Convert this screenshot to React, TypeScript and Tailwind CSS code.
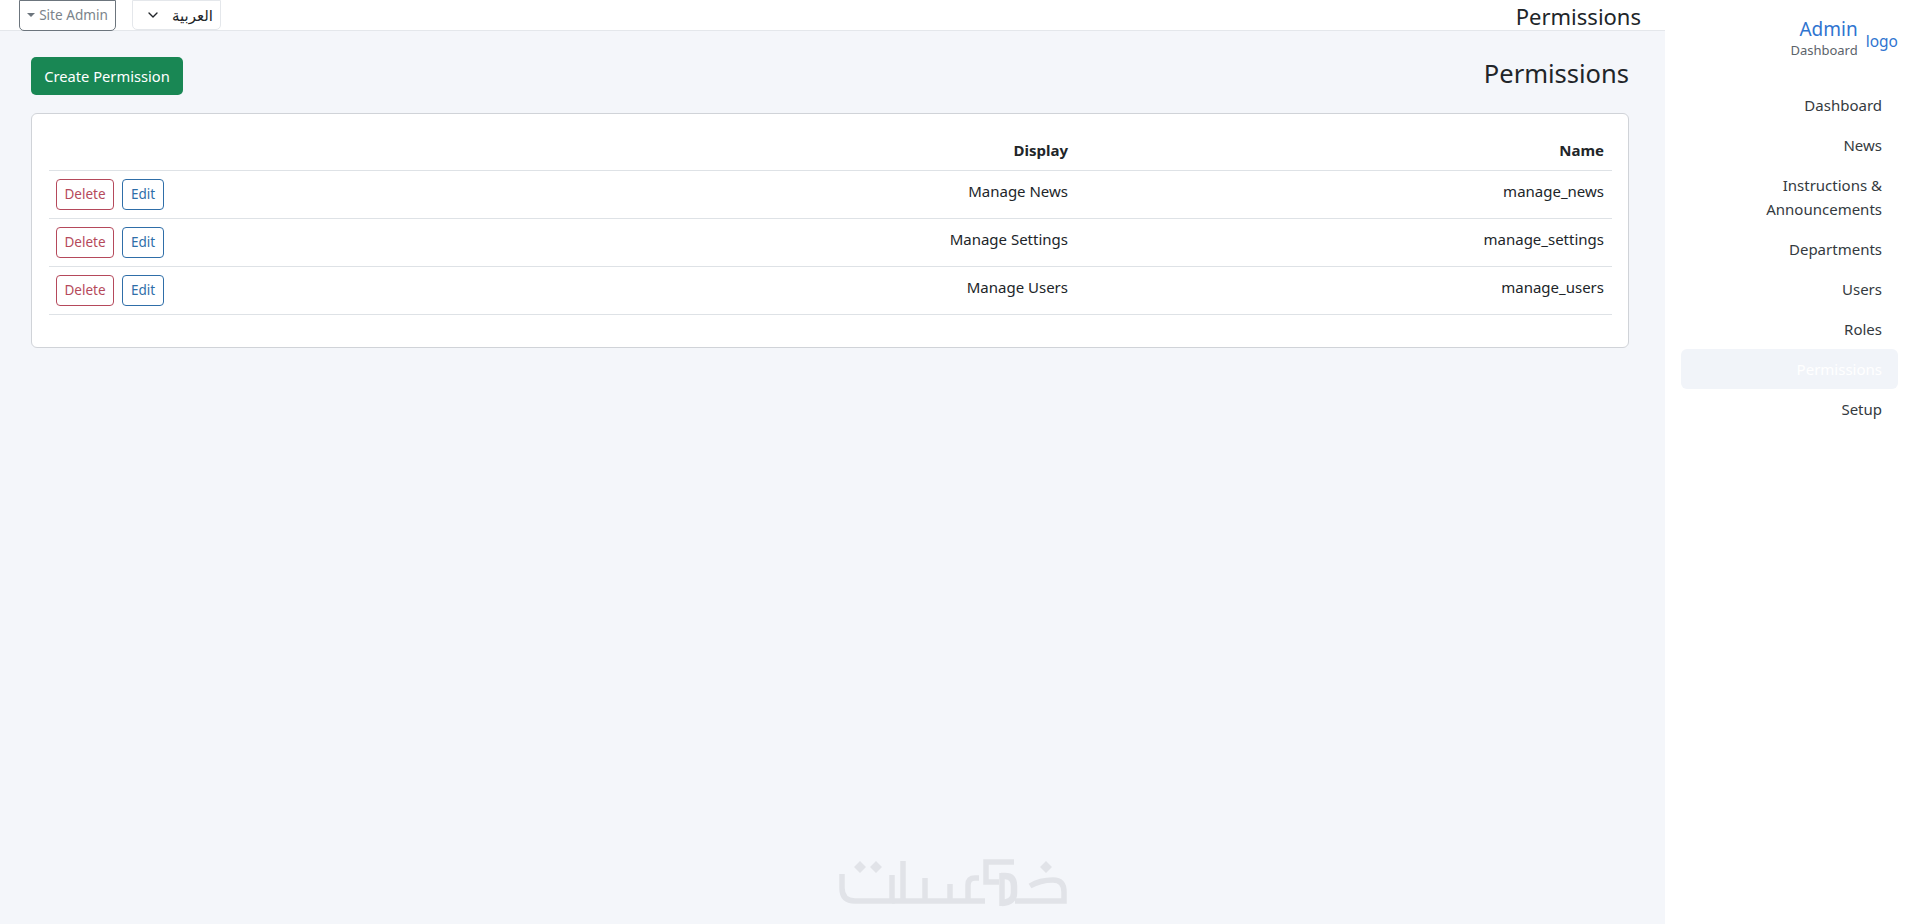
import { ChevronDown } from "lucide-react";

const navItems = [
  { label: "Dashboard", y: "h-10" },
  { label: "News", y: "h-10" },
  { label: "Instructions & Announcements", y: "py-2" },
  { label: "Departments", y: "h-10" },
  { label: "Users", y: "h-10" },
  { label: "Roles", y: "h-10" },
  { label: "Permissions", y: "h-10", active: true },
  { label: "Setup", y: "h-10" },
];

const rows = [
  { display: "Manage News", name: "manage_news" },
  { display: "Manage Settings", name: "manage_settings" },
  { display: "Manage Users", name: "manage_users" },
];

const Watermark = () => (
  <svg
    viewBox="835 855 240 60"
    className="absolute left-[835px] top-[855px] h-[60px] w-[240px]"
    fill="none"
    stroke="#e1e3e8"
    strokeWidth="5.5"
  >
    <path d="M842 874V888Q842 901 855 901H892V875" />
    <path d="M903 861V901M892 901H985" />
    <path d="M925 878V901M950 884V901M968 901V885Q968 878 975 878H979" />
    <path d="M1014 862H986V882H999" />
    <path d="M1001 876H1005Q1014 876 1014 886V893Q1014 902 1002 903" strokeWidth="6.5" />
    <path d="M1002 873V906M1015 901H1064V892Q1064 880 1053 880Q1040 880 1030 886" />
    <path d="M860 861l6 6-6 6-6-6zM876 861l6 6-6 6-6-6zM1046 861l6 6-6 6-6-6z" fill="#e1e3e8" stroke="none" />
  </svg>
);

const App = () => {
  return (
    <div className="relative flex h-[924px] w-[1910px] overflow-hidden bg-white font-['Noto_Sans',sans-serif] text-[#212529]">
      <div className="flex w-[1665px] flex-col bg-[#f4f6fa]">
        <header className="flex h-[31px] items-center justify-between border-b border-[#e4e7eb] bg-white pl-[19px] pr-6">
          <div className="flex items-center gap-4">
            <button className="flex h-[31px] w-[97px] items-center justify-center gap-1 rounded-b-[5px] border border-[#6c757d] text-[13.6px] text-[#7b838a]">
              <span className="h-0 w-0 border-x-[4px] border-t-[4px] border-x-transparent border-t-[#6c757d]" />
              Site Admin
            </button>
            <div className="flex h-[30px] w-[89px] items-center justify-between rounded-b-[5px] border border-[#e4e7eb] pl-[12px] pr-[7px] text-[15px]">
              <ChevronDown size={16} strokeWidth={2} />
              <span className="font-['Noto_Sans_CJK_SC','DejaVu_Sans',sans-serif]">العربية</span>
            </div>
          </div>
          <h1 className="pt-px text-[22px] leading-none">Permissions</h1>
        </header>

        <main className="flex flex-col px-[31px] pr-9">
          <div className="mt-[26px] flex items-center justify-between">
            <button className="h-[38px] w-[152px] rounded-[5px] bg-[#198754] text-[14.7px] text-white">
              Create Permission
            </button>
            <h2 className="pb-[5px] text-[25.5px] leading-none">Permissions</h2>
          </div>

          <section className="mt-[18px] h-[235px] rounded-[6px] border border-[#d0d3d8] bg-white pl-[17px] pr-4 pt-[17px]">
            <table className="w-full border-collapse text-[15px]">
              <thead>
                <tr className="h-[39px] border-b border-[#dee2e6] text-right font-bold">
                  <th className="w-[560px]" />
                  <th className="px-2 pr-2">Display</th>
                  <th className="w-[536px] pr-2">Name</th>
                </tr>
              </thead>
              <tbody>
                {rows.map((row) => (
                  <tr key={row.name} className="h-12 border-b border-[#dee2e6] text-right">
                    <td className="pl-[7px]">
                      <div className="flex gap-2">
                        <button className="h-[31px] w-[58px] rounded-[4px] border border-[#b5495b] pt-px text-[13.5px] text-[#b5495b]">
                          Delete
                        </button>
                        <button className="h-[31px] w-[42px] rounded-[4px] border border-[#2f6ea8] pt-px text-[13.5px] text-[#2f6ea8]">
                          Edit
                        </button>
                      </div>
                    </td>
                    <td className="px-2 pb-[6px]">{row.display}</td>
                    <td className="pb-[6px] pr-2">{row.name}</td>
                  </tr>
                ))}
              </tbody>
            </table>
          </section>
        </main>
      </div>

      <aside className="flex w-[245px] flex-col pl-4 pr-3 text-right">
        <div className="flex justify-end gap-2 pt-[15px]">
          <div className="flex flex-col">
            <span className="text-[19px] leading-[28px] text-[#2f74d0]">Admin</span>
            <span className="text-[13px] leading-[14px] text-[#5c636a]">Dashboard</span>
          </div>
          <span className="pt-[14px] text-[15.5px] leading-[24px] text-[#2f74d0]">logo</span>
        </div>
        <nav className="mt-[28px] flex flex-col text-[15px] leading-6 text-[#343a40]">
          {navItems.map((item) => (
            <a
              key={item.label}
              className={`flex items-center justify-end rounded-[6px] px-4 ${item.y} ${
                item.active ? "bg-[#f1f4f9] text-white" : ""
              }`}
            >
              {item.label}
            </a>
          ))}
        </nav>
      </aside>

      <Watermark />
    </div>
  );
};

export default App;
